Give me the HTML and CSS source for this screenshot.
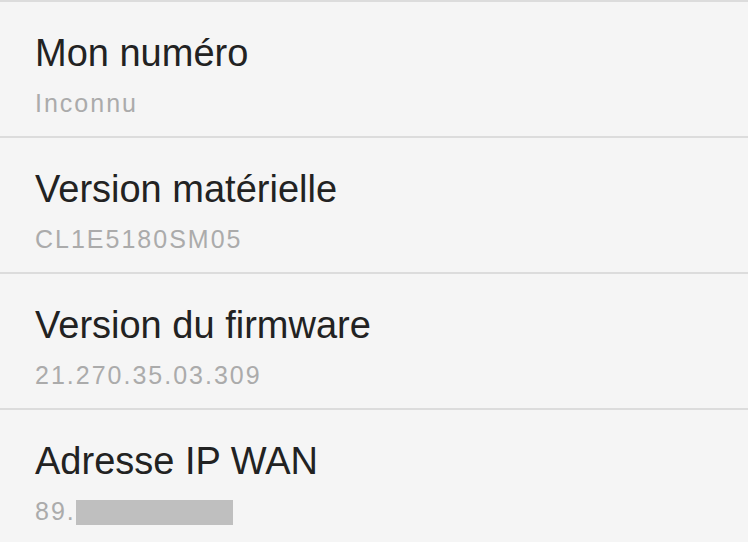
FILE: index.html
```
<!DOCTYPE html>
<html lang="fr">
<head>
    <meta charset="UTF-8">
    <meta name="viewport" content="width=device-width, initial-scale=1.0">
    <title>Informations</title>
    <link rel="stylesheet" href="styles.css">
</head>
<body>
    <ul class="infoList">
        <li class="infoRow">
            <h3>Mon numéro</h3>
            <p>Inconnu</p>
        </li>
        <li class="infoRow">
            <h3>Version matérielle</h3>
            <p>CL1E5180SM05</p>
        </li>
        <li class="infoRow">
            <h3>Version du firmware</h3>
            <p>21.270.35.03.309</p>
        </li>
        <li class="infoRow">
            <h3>Adresse IP WAN</h3>
            <p>89.<span class="masked"></span></p>
        </li>
    </ul>
</body>
</html>
```
FILE: styles.css
```
*{margin: 0; padding: 0; box-sizing: border-box; list-style: none; font-family: "Liberation Sans", Arial, sans-serif;}
body{background-color: #f5f5f5; height: 542px; overflow: hidden;}
.infoList{display: flex; flex-direction: column;}
.infoRow{height: 136px; border-top: 2px solid #dcdcdc; padding: 32px 0 0 35px;}
.infoRow h3{font-size: 38px; line-height: 38px; font-weight: normal; color: #222;}
.infoRow p{font-size: 25px; line-height: 25px; margin-top: 19px; letter-spacing: 2px; color: #ababab;}
.masked{display: inline-block; width: 157px; height: 25px; background-color: #bfbfbf; margin-left: 0; vertical-align: -5px;}
```
